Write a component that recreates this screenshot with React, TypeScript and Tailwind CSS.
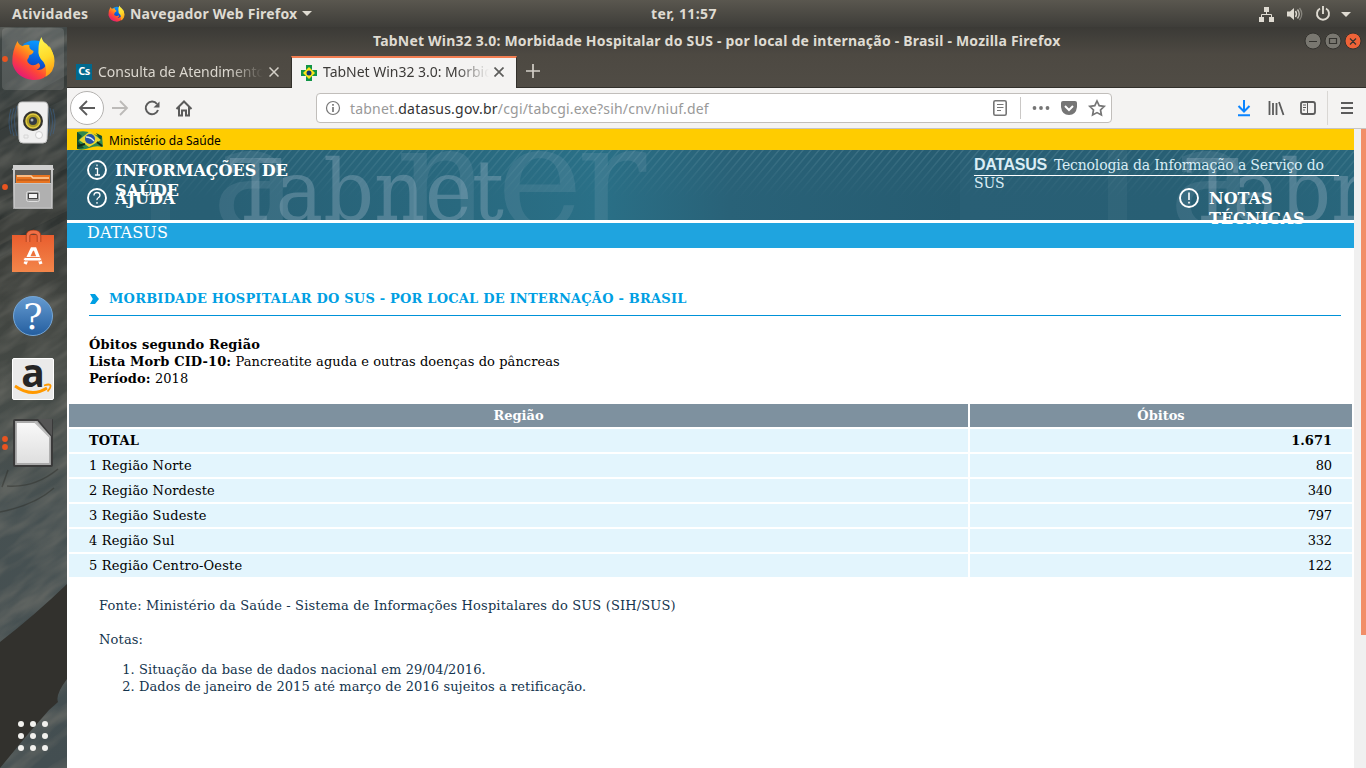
import React from "react";

const ubuntu = "font-['Noto_Sans','Open_Sans',sans-serif]";

function FirefoxLogo({ size }: { size: number }) {
  const id = "ff" + size;
  return (
    <svg width={size} height={size} viewBox="0 0 44 45" className="shrink-0">
      <defs>
        <linearGradient id={id + "a"} x1="0.85" y1="0.1" x2="0.2" y2="0.95">
          <stop offset="0" stopColor="#ffe226" />
          <stop offset="0.35" stopColor="#ffa018" />
          <stop offset="0.65" stopColor="#ff4a33" />
          <stop offset="1" stopColor="#e3147c" />
        </linearGradient>
        <linearGradient id={id + "b"} x1="0.6" y1="0" x2="0.4" y2="1">
          <stop offset="0" stopColor="#0a9bff" />
          <stop offset="0.6" stopColor="#0759d8" />
          <stop offset="1" stopColor="#30238f" />
        </linearGradient>
        <linearGradient id={id + "c"} x1="0.4" y1="0" x2="0.6" y2="1">
          <stop offset="0" stopColor="#fff44f" />
          <stop offset="0.5" stopColor="#ffda2a" />
          <stop offset="1" stopColor="#ff9412" />
        </linearGradient>
      </defs>
      <circle cx="23" cy="22" r="17.5" fill={`url(#${id}b)`} />
      <path d="M6 5 Q7 9 11 10 Q14 8 18 9 Q17 12 20 14 L22 15 Q22 18 18 19 L17 22 Q14 25 18 28 Q22 31 27 27 Q31 31 25 34 Q33 35 36 26 L38 10 Q46 24 40 34 Q33 45 21 44 Q5 42 1 28 Q0 16 6 5Z" fill={`url(#${id}a)`} />
      <path d="M30 1 Q31 6 35 8 Q43 16 43 25 Q43 36 34 41 Q36 32 32 26 Q26 21 27 13 Q27 6 30 1Z" fill={`url(#${id}c)`} />
    </svg>
  );
}

function TopBar() {
  return (
    <div className={`flex h-[27px] shrink-0 items-center bg-linear-to-b from-[#5a574f] to-[#3e3d39] text-[14px] font-bold text-[#dfdbd2] ${ubuntu}`}>
      <span className="ml-3 w-[96px] whitespace-nowrap tracking-[0.28px]">Atividades</span>
      <FirefoxLogo size={17} />
      <span className="ml-[5px] w-[168px] whitespace-nowrap tracking-[0.2px]">Navegador Web Firefox</span>
      <svg width="10" height="6" className="ml-[4px]"><path d="M0 0H10L5 5Z" fill="#dfdbd2" /></svg>
      <span className="ml-[339px] w-[67px] whitespace-nowrap tracking-[0.38px]">ter, 11:57</span>
      <svg width="100" height="20" viewBox="1256 3 100 20" className="ml-auto mr-[10px]" fill="none" stroke="#dfdbd2">
        <path d="M1264 6h5v5h-5zM1259 16h5v5h-5zM1269 16h5v5h-5z" fill="#dfdbd2" stroke="none" />
        <path d="M1266.500 11v3M1261.500 17v-3.500h10V17" />
        <path d="M1287 10.500h3l4-3.500v12l-4-3.500h-3z" fill="#dfdbd2" stroke="none" />
        <path d="M1295.500 10q2 3 0 6" strokeWidth="1.400" />
        <path d="M1297.500 8.500q3.500 4.500 0 9" strokeWidth="1.400" opacity=".8" />
        <path d="M1299.500 7q4.500 6 0 12" strokeWidth="1.300" opacity=".4" />
        <path d="M1320 7.500a6 6 0 1 0 6 0M1323 5v8" strokeWidth="1.900" />
        <path d="M1341 11h10l-5 5z" fill="#dfdbd2" stroke="none" />
      </svg>
    </div>
  );
}

function Launcher() {
  return (
    <aside className="w-[67px] shrink-0 overflow-hidden bg-[#3c403d]">
      <svg width="67" height="741" viewBox="0 27 67 741">
        <defs>
          <filter id="rock" x="0" y="0" width="100%" height="100%">
            <feTurbulence type="fractalNoise" baseFrequency="0.018 0.07" numOctaves="3" seed="4" />
            <feColorMatrix values="0 0 0 0 .17  0 0 0 0 .17  0 0 0 0 .15  1.7 0 0 0 -.6" />
          </filter>
          <linearGradient id="wall" x1="0" y1="0" x2="0" y2="1">
            <stop offset="0" stopColor="#414847" /><stop offset=".12" stopColor="#363c3b" />
            <stop offset=".3" stopColor="#3d3f3b" /><stop offset=".48" stopColor="#454a46" />
            <stop offset=".65" stopColor="#475152" /><stop offset="1" stopColor="#434e51" />
          </linearGradient>
          <linearGradient id="silver" x1="0" y1="0" x2="0" y2="1"><stop stopColor="#d0d0d0" /><stop offset="1" stopColor="#999" /></linearGradient>
          <linearGradient id="orange" x1="0" y1="0" x2="0" y2="1"><stop stopColor="#e95d2e" /><stop offset="1" stopColor="#f3864a" /></linearGradient>
          <linearGradient id="help" x1="0" y1="0" x2="0" y2="1"><stop stopColor="#659bd1" /><stop offset="1" stopColor="#245e9f" /></linearGradient>
          <linearGradient id="paper" x1="0" y1="0" x2="0" y2="1"><stop stopColor="#f9f9f9" /><stop offset="1" stopColor="#dedede" /></linearGradient>
        </defs>
        <rect y="27" width="67" height="741" fill="url(#wall)" />
        <path d="M0 112L67 75V98L0 130ZM0 203L67 168V182L0 220ZM0 245L67 211V219L0 258Z" fill="#2b302f" opacity=".75" />
        <g transform="rotate(-34 33 400)"><rect x="-500" y="-100" width="1000" height="1000" filter="url(#rock)" opacity=".8" /></g>
        <path d="M0 642Q35 615 67 584V679Q55 695 58 702L49 710L28 734L0 768Z" fill="#32312d" />
        <path d="M0 512Q35 505 54 488M2 487L8 470M7 486Q35 488 58 469" fill="none" stroke="#272723" strokeWidth="1.500" opacity=".4" />
        <rect x="2" y="28" width="62" height="62" rx="4" fill="#fff" opacity=".13" />
        <g fill="#e95420"><circle cx="5" cy="59" r="2.900" /><circle cx="5" cy="187" r="2.900" /><circle cx="5" cy="439" r="2.900" /><circle cx="5" cy="447" r="2.900" /></g>
        <g transform="translate(11 36)"><FirefoxLogo size={45} /></g>
        <g fill="none" stroke="#3b6799" strokeWidth="1" opacity=".5"><path d="M14 108q-5 14 0 28M11 109q-4 13 0 25M17 106q-5 15 0 30M50 108q5 14 0 28M53 109q4 13 0 25M47 106q5 15 0 30" /></g>
        <path d="M22 102h22q4 0 4 5l-1 32q0 4-4 4H23q-4 0-4-4l-1-32q0-5 4-5Z" fill="#efefef" stroke="#c4c4c4" />
        <circle cx="33" cy="121" r="10" fill="#34342f" /><circle cx="33" cy="121" r="7" fill="#ad9b25" stroke="#e2cc42" strokeWidth="1.500" /><circle cx="33" cy="121" r="4" fill="#343a42" /><circle cx="32" cy="120" r="1.500" fill="#aeb6bc" />
        <circle cx="39" cy="135" r="3.500" fill="#fafafa" stroke="#cfcfcf" /><path d="M24 135h4v3h-4z" fill="none" stroke="#d6d6d6" />
        <path d="M13 165h40v44H13z" fill="url(#silver)" /><path d="M12 170l2-5h38l2 5z" fill="#cfcfcf" /><path d="M15 170h36v13H15z" fill="#5d5b57" /><path d="M16 175h34v9H16z" fill="#e87420" /><path d="M17 176h14l2 2h16" stroke="#ffd2a2" strokeWidth="1.500" fill="none" /><path d="M17 180h32" stroke="#a84c12" />
        <path d="M14.500 183.500h37v24.500h-37z" fill="#b0b0b0" stroke="#c4c4c4" /><rect x="26.500" y="191.500" width="13" height="10" rx="2" fill="#a2a2a2" stroke="#dedede" /><rect x="28.500" y="193.500" width="9" height="5" fill="#f4f4f4" stroke="#444" />
        <path d="M12 235h42v37H12z" fill="url(#orange)" /><path d="M28 242v-6q0-4 5.500-4t5.500 4v6" fill="none" stroke="#a73d18" strokeWidth="4.500" /><path d="M28 242v-6q0-4 5.500-4t5.500 4v6" fill="none" stroke="#ef7048" strokeWidth="2.800" />
        <path d="M25 264L32 249H35L41 264M29 258H38" fill="none" stroke="#fff" strokeWidth="3.300" /><rect x="23.500" y="257.500" width="18" height="3.500" rx="1.700" fill="#fff" stroke="#ef7b49" />
        <circle cx="33" cy="316" r="19.500" fill="url(#help)" stroke="#76a7d7" /><text x="33" y="329" textAnchor="middle" fontSize="36" fontFamily="DejaVu Serif" fill="#fff">?</text>
        <rect x="12.500" y="358.500" width="41" height="41" rx="1.500" fill="#eaeaea" stroke="#fff" /><text x="33" y="387" textAnchor="middle" fontSize="39" fontWeight="bold" fontFamily="Open Sans" fill="#252525">a</text><path d="M15 386Q32 398 47 388" fill="none" stroke="#f90" strokeWidth="2.800" /><path d="M44 385.500q6-2 6.500 0t-3 6" fill="none" stroke="#f90" strokeWidth="1.800" />
        <path d="M15 419h37q1 0 1 1v45q0 2-2 2H15q-2 0-2-2v-44q0-2 2-2Z" fill="#3a3a3a" /><path d="M16 422h21l13 15v27H16Z" fill="url(#paper)" stroke="#aaa" strokeWidth="1.800" /><path d="M38 419h14v17Z" fill="#555" /><path d="M35 422L50 437" stroke="#bbb" strokeWidth="2" />
        <g fill="#f2f1ee">{[724, 736, 748].map((y) => [21, 33, 45].map((x) => <circle key={`${x}-${y}`} cx={x} cy={y} r="3" />))}</g>
      </svg>
    </aside>
  );
}

function CrossFavicon() {
  return (
    <svg width="16" height="16" viewBox="0 0 16 16" className="shrink-0">
      <path d="M5 0h6v5h5v6h-5v5H5v-5H0V5h5z" fill="#119447" /><path d="M8 2l6 6-6 6-6-6z" fill="#fce51b" /><circle cx="8" cy="8" r="2.500" fill="#15366f" />
    </svg>
  );
}

function TitleAndTabs() {
  return (
    <div className={`flex h-[61px] shrink-0 flex-col bg-linear-to-b from-[#3b3a36] via-[#4d4942] via-45% to-[#504c45] ${ubuntu}`}>
      <div className="flex h-[29px] items-center">
        <span className="-mt-[2px] ml-[306px] w-[690px] whitespace-nowrap text-[14px] font-bold tracking-[0.21px] text-[#dfdbd2]">TabNet Win32 3.0: Morbidade Hospitalar do SUS - por local de internação - Brasil - Mozilla Firefox</span>
        <svg width="58" height="18" viewBox="0 0 58 18" className="-mt-[1px] ml-auto mr-[4px]">
          <g stroke="#34332f"><circle cx="9" cy="9" r="8" fill="#797770" /><circle cx="29" cy="9" r="8" fill="#797770" /><circle cx="49" cy="9" r="8" fill="#ef6338" /></g>
          <path d="M5 9.500h8M25.500 6.500h7v5h-7zM46 6.500l6 6M52 6.500l-6 6" fill="none" stroke="#34332f" strokeWidth="1.200" />
        </svg>
      </div>
      <div className="flex h-8 border-b border-[#32302b]">
        <div className="flex w-[224px] items-center">
          <span className="ml-[9px] flex h-4 w-4 items-center justify-center bg-[#00698e] text-[11px] font-bold tracking-[-0.5px] text-white">Cs</span>
          <span className="ml-[6px] w-[165px] overflow-hidden whitespace-nowrap mask-r-from-80% text-[14px] tracking-[-0.03px] text-[#dbd7cf]">Consulta de Atendimentos</span>
          <svg width="10" height="10" className="ml-[6px]"><path d="M.5.5l9 9M9.500.5l-9 9" stroke="#d4d0c8" strokeWidth="1.500" /></svg>
        </div>
        <div className="-mb-px flex w-[226px] items-center border-x border-t-2 border-x-[#32302b] border-t-[#f37e52] bg-[#f4f3f2]">
          <span className="ml-[9px]"><CrossFavicon /></span>
          <span className="-mt-[3px] ml-[6px] w-[166px] overflow-hidden whitespace-nowrap mask-r-from-80% text-[14px] tracking-[-0.02px] text-[#3d3b39]">TabNet Win32 3.0: Morbidade</span>
          <svg width="10" height="10" className="-mt-[2px] ml-[5px]"><path d="M.5.5l9 9M9.500.5l-9 9" stroke="#5d5d5b" strokeWidth="1.700" /></svg>
        </div>
        <svg width="16" height="16" className="ml-[8px] mt-[7px]"><path d="M8 1v14M1 8h14" stroke="#d3cfc7" strokeWidth="1.700" /></svg>
      </div>
    </div>
  );
}

function Toolbar() {
  return (
    <div className={`flex h-[41px] shrink-0 items-center border-b border-[#c7c4c2] bg-[#f4f3f2] ${ubuntu}`}>
      <svg width="130" height="40" viewBox="67 88 130 40" className="shrink-0" fill="none" stroke="#5b5b5b" strokeWidth="1.800">
        <circle cx="87" cy="108" r="16.500" fill="#fff" stroke="#b4b2b0" strokeWidth="1" />
        <path d="M95 108H80M87 101l-7 7 7 7" />
        <path d="M112 108h15M120 101l7 7-7 7" stroke="#bcbab8" />
        <path d="M157 104a6.300 6.300 0 1 0 1 6" strokeWidth="2" /><path d="M153.500 107.500h6v-6z" fill="#5b5b5b" stroke="none" />
        <path d="M176.500 109l7.500-7.500 7.500 7.500M179 107v8.500h3v-5h4v5h3V107" strokeWidth="2" />
      </svg>
      <div className="ml-[119px] flex h-[30px] w-[796px] items-center rounded-[4px] border border-[#c1bebb] bg-white">
        <svg width="16" height="16" className="ml-2 shrink-0"><circle cx="8" cy="8" r="6.500" fill="none" stroke="#777" strokeWidth="1.200" /><path d="M8 4v1.700M8 7v5" stroke="#777" strokeWidth="1.700" /></svg>
        <span className="ml-[9px] w-[365px] whitespace-nowrap text-[14px] tracking-[0.2px] text-[#999]">tabnet.<span className="text-[#333]">datasus.gov.br</span>/cgi/tabcgi.exe?sih/cnv/niuf.def</span>
        <svg width="118" height="28" viewBox="990 94 118 28" className="ml-auto mr-[3px]" fill="none" stroke="#757575" strokeWidth="1.600">
          <rect x="993.800" y="100.800" width="12.400" height="14.400" rx="1.500" /><path d="M997 104.500h6.500M997 107.500h6.500M997 110.500h4" strokeWidth="1" />
          <path d="M1020.500 97v22" stroke="#cac8c6" strokeWidth="1" />
          <g fill="#757575" stroke="none"><circle cx="1034.500" cy="108" r="1.900" /><circle cx="1041" cy="108" r="1.900" /><circle cx="1047.500" cy="108" r="1.900" /><path d="M1063 101h12q2 0 2 2v4q-1 8-8 8t-8-8v-4q0-2 2-2" /></g>
          <path d="M1065 106l4 4 4-4" stroke="#fff" strokeWidth="2" />
          <path d="M1097 101l2.200 4.700 5 .7-3.700 3.600.9 5-4.400-2.400-4.400 2.400.9-5-3.700-3.600 5-.7z" strokeWidth="1.700" />
        </svg>
      </div>
      <svg width="126" height="40" viewBox="1234 88 126 40" className="ml-auto mr-[6px]" fill="none" stroke="#5b5b5b" strokeWidth="1.800">
        <path d="M1244 100v11M1238.500 106l5.500 5.500 5.500-5.500M1238 115.200h12" stroke="#0a84ff" strokeWidth="2" />
        <path d="M1269.500 101v14M1273 103v12M1276.500 103v12M1279 102l4.500 13" />
        <rect x="1301" y="102" width="14" height="12" rx="2" /><path d="M1307.500 102v12M1303 105h3M1303 107.500h3M1303 110h2" strokeWidth="1" />
        <path d="M1327.500 91v34" stroke="#d9d7d4" strokeWidth="1" /><path d="M1341 103h12M1341 108h12M1341 113h12" strokeWidth="2" />
      </svg>
    </div>
  );
}

function HeaderArt() {
  return (
    <svg width="1287" height="70" viewBox="67 150 1287 70" className="absolute inset-0" fontFamily="DejaVu Serif, serif">
      <defs>
        <linearGradient id="teal" gradientUnits="userSpaceOnUse" x1="0" y1="0" x2="960" y2="0" spreadMethod="repeat">
          <stop offset="0" stopColor="#295f75" /><stop offset=".22" stopColor="#285f74" /><stop offset=".48" stopColor="#29697f" /><stop offset=".62" stopColor="#2a7087" /><stop offset=".76" stopColor="#296278" /><stop offset="1" stopColor="#265c71" />
        </linearGradient>
        <pattern id="hatch" width="8" height="10" patternUnits="userSpaceOnUse" patternTransform="skewX(-40)"><path d="M1 0V10" stroke="#8bb4c1" strokeWidth="1.400" /></pattern>
        <linearGradient id="fade" x1="0" y1="0" x2="0" y2="1"><stop stopColor="#fff" stopOpacity=".28" /><stop offset=".7" stopColor="#fff" stopOpacity="0" /></linearGradient>
        <mask id="fadeMask"><rect x="67" y="150" width="1287" height="70" fill="url(#fade)" /></mask>
      </defs>
      <rect x="67" y="150" width="1287" height="70" fill="url(#teal)" />
      <rect x="67" y="150" width="1287" height="70" fill="url(#hatch)" mask="url(#fadeMask)" />
      {[0, 957].map((dx) => (
        <g key={dx} transform={`translate(${dx} 0)`} fill="#9ab3c4">
          <path d="M151 150h19v70h-19z" opacity=".08" />
          <g opacity=".15" fontSize="145"><text x="212" y="228">a</text><text x="396" y="228">n</text><text x="497" y="228">e</text><text x="577" y="228">r</text></g>
          <text x="229" y="220" fontSize="84" textLength="275" lengthAdjust="spacingAndGlyphs" opacity=".36">Tabnet</text>
        </g>
      ))}
    </svg>
  );
}

function RoundGlyph({ kind }: { kind: "info" | "help" | "alert" }) {
  return (
    <svg width="20" height="20" viewBox="0 0 20 20" className="shrink-0" fill="none" stroke="#fff" strokeWidth="1.300">
      <circle cx="10" cy="10" r="9" strokeWidth="1.900" />
      {kind === "info" && <path d="M8 8.500h2.500V15M8 15h5M10 4.500v1.800" />}
      {kind === "help" && <path d="M7 7.500q0-3 3-3t3 2.700q0 1.500-1.700 2.500t-1.300 2.500M10 14v1.700" />}
      {kind === "alert" && <path d="M10 4.500v7.500M10 13.800v1.700" strokeWidth="1.600" />}
    </svg>
  );
}

function Banner() {
  return (
    <header>
      <div className="flex h-[21px] items-center bg-[#ffcc00]">
        <svg width="28" height="20" viewBox="0 0 28 20" className="ml-[9px]">
          <path d="M1 2Q9 0 15 3T26 6L27 17Q20 15 13 18T1 19Z" fill="#2f8750" /><path d="M1 2l5 4-4 5 6 7-7 1zM20 3l6 3-1 5z" fill="#144c2e" /><path d="M3 10L14 1l11 9-12 7Z" fill="#e9d62f" /><circle cx="14" cy="9" r="5" fill="#2550a5" /><path d="M10 7q5 0 8 4" stroke="#dce8f4" fill="none" strokeWidth="1.300" /><path d="M21 12l5 4M2 16l7-2" stroke="#102a17" strokeWidth="2" />
        </svg>
        <span className="ml-[5px] mt-[3px] whitespace-nowrap font-['Noto_Sans',sans-serif] text-[12px] text-black">Ministério da Saúde</span>
      </div>
      <div className="relative h-[70px]">
        <HeaderArt />
        <div className="relative flex h-full justify-between font-['DejaVu_Serif',serif] text-white">
          <nav className="ml-5 pt-[10px] text-[16px] leading-5 font-bold">
            <div className="flex h-7 w-[230px] gap-2"><RoundGlyph kind="info" /><span className="pt-px">INFORMAÇÕES DE SAÚDE</span></div>
            <div className="flex h-7 w-[230px] gap-2"><RoundGlyph kind="help" /><span className="pt-px">AJUDA</span></div>
          </nav>
          <div className="mr-[15px] w-[365px]">
            <div className="mt-[6px] h-5 border-b border-white text-[14px] leading-[18px] tracking-[-0.17px] text-[#d9edf5]">
              <b className="mr-[7px] font-['Liberation_Sans',sans-serif] text-[16px] tracking-[-0.3px]">DATASUS</b>Tecnologia da Informação a Serviço do<br />SUS
            </div>
            <div className="ml-[205px] mt-3 flex h-7 w-[150px] gap-[10px] text-[16px] leading-5 font-bold"><RoundGlyph kind="alert" /><span className="pt-px">NOTAS TÉCNICAS</span></div>
          </div>
        </div>
      </div>
      <div className="h-7 border-t-[3px] border-white bg-[#1fa4df] pl-5 font-['DejaVu_Serif',serif] text-[16px] leading-[19px] tracking-[0.1px] text-white">DATASUS</div>
    </header>
  );
}

const rows = [["TOTAL", "1.671"], ["1 Região Norte", "80"], ["2 Região Nordeste", "340"], ["3 Região Sudeste", "797"], ["4 Região Sul", "332"], ["5 Região Centro-Oeste", "122"]];

function Report() {
  return (
    <main className="font-['DejaVu_Serif',serif] text-[13px] leading-[17px] text-black">
      <h1 className="mt-[42px] mr-[13px] ml-[22px] flex h-[26px] items-start border-b border-[#0092d8] font-bold tracking-[0.21px] text-[#009fe3]">
        <svg width="12" height="12" className="mt-[3px] mr-2"><path d="M1 1h5l4 5-4 5H1l2.800-5z" fill="#009fe3" /></svg>
        <span>MORBIDADE HOSPITALAR DO SUS - POR LOCAL DE INTERNAÇÃO - BRASIL</span>
      </h1>
      <div className="mt-5 ml-[22px] tracking-[0.08px]">
        <p className="tracking-[0.15px]"><b>Óbitos segundo Região</b></p>
        <p><b className="tracking-[0.12px]">Lista Morb CID-10:</b> Pancreatite aguda e outras doenças do pâncreas</p>
        <p><b className="tracking-[0.12px]">Período:</b> 2018</p>
      </div>
      <div className="mx-[2px] mt-[17px] grid grid-cols-[899px_382px] gap-[2px] leading-[23px]">
        <div className="h-[23px] bg-[#7e919f] text-center font-bold text-white">Região</div>
        <div className="h-[23px] bg-[#7e919f] text-center font-bold text-white">Óbitos</div>
        {rows.map(([name, count], i) => (
          <React.Fragment key={name}>
            <div className={`h-[23px] bg-[#e3f5fd] pl-5 tracking-[0.17px] ${i === 0 ? "font-bold" : ""}`}>{name}</div>
            <div className={`h-[23px] bg-[#e3f5fd] pr-5 text-right ${i === 0 ? "font-bold" : "tracking-[-0.15px]"}`}>{count}</div>
          </React.Fragment>
        ))}
      </div>
      <div className="mt-5 ml-8 text-[#14344d]">
        <p className="tracking-[0.15px]">Fonte: Ministério da Saúde - Sistema de Informações Hospitalares do SUS (SIH/SUS)</p>
        <p className="mt-[17px] tracking-[0.15px]">Notas:</p>
        <ol className="mt-[13px] list-decimal pl-10 tracking-[0.09px]"><li>Situação da base de dados nacional em 29/04/2016.</li><li>Dados de janeiro de 2015 até março de 2016 sujeitos a retificação.</li></ol>
      </div>
    </main>
  );
}

export default function App() {
  return (
    <div className="flex h-[768px] w-[1366px] flex-col overflow-hidden">
      <TopBar />
      <div className="flex min-h-0 flex-1">
        <Launcher />
        <div className="flex w-[1299px] flex-col">
          <TitleAndTabs />
          <Toolbar />
          <div className="flex min-h-0 flex-1 bg-white">
            <div className="w-[1287px]"><Banner /><Report /></div>
            <div className="flex w-3 justify-end bg-[#f0f0f0]"><div className="h-[506px] w-[5px] bg-[#f18e68]" /></div>
          </div>
        </div>
      </div>
    </div>
  );
}
